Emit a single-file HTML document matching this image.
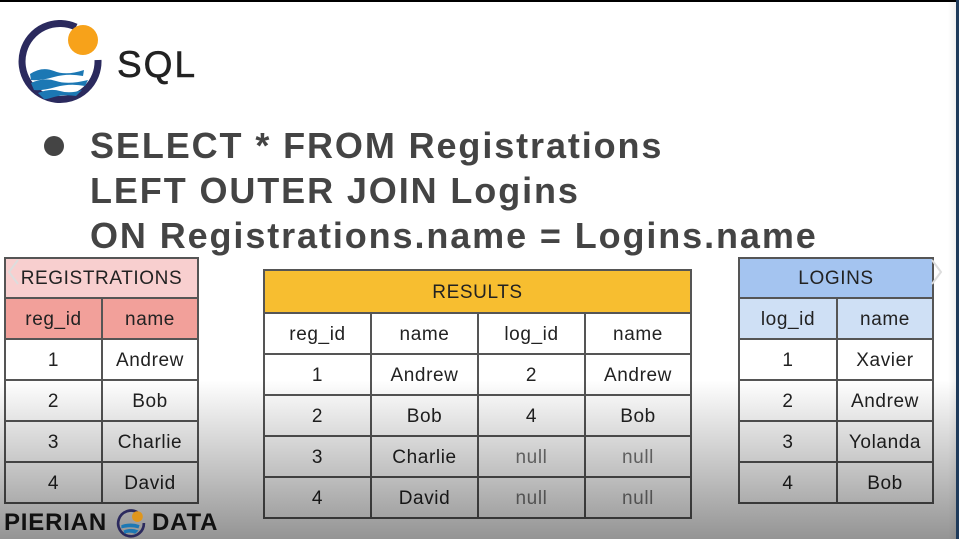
<!DOCTYPE html>
<html><head><meta charset="utf-8"><style>
*{margin:0;padding:0;box-sizing:border-box}
body{width:959px;height:539px;overflow:hidden;background:#fff;position:relative;font-family:"Liberation Sans",sans-serif;color:#333}
.top{position:absolute;left:0;top:0;width:956px;height:2px;background:#000}
.right{position:absolute;right:0;top:0;width:3px;height:539px;background:#1e3a5a}
.rshade{position:absolute;right:3px;top:0;width:8px;height:539px;background:linear-gradient(90deg,rgba(0,0,0,0),rgba(0,0,0,0.06))}
.title{position:absolute;left:117px;top:44px;font-size:37px;color:#222;letter-spacing:2px;-webkit-text-stroke:0.6px #222}
.code{position:absolute;left:90px;top:123px;font-size:36px;line-height:45px;color:#444;font-weight:bold;letter-spacing:1.9px}
.bullet{position:absolute;left:44px;top:136px;width:20px;height:20px;border-radius:50%;background:#444}
table{position:absolute;border-collapse:collapse;font-size:19px;letter-spacing:0.6px;text-align:center;color:#222}
td{border:2px solid #555;height:41px;padding:2px 0 0}
.hd td{height:40px}
.null{color:#777}
.shade{position:absolute;left:0;top:380px;width:959px;height:159px;background:linear-gradient(180deg,rgba(0,0,0,0),rgba(0,0,0,0.42));pointer-events:none}
.brand{position:absolute;top:509px;font-size:24px;font-weight:bold;color:#111;letter-spacing:0.8px}
</style></head><body>
<div class="top"></div>
<svg style="position:absolute;left:18px;top:20px" width="86" height="86" viewBox="0 0 86 86">
<path d="M58 7 A38 38 0 1 0 80 40" fill="none" stroke="#2b2a5e" stroke-width="7"/>
<circle cx="65" cy="20" r="15" fill="#f7a21a"/>
<path d="M12 54 Q24 46 36 51 T66 50 L65 56 Q50 53 36 57 T13 60Z" fill="#1c78b4"/>
<path d="M13 63 Q26 57 38 61 T70 60 L67 66 Q52 63 38 67 T16 70Z" fill="#1c78b4"/>
<path d="M20 73 Q32 68 42 71 T64 70 L58 76 Q46 74 36 77 T26 79Z" fill="#1c78b4"/>
</svg>
<div class="title">SQL</div>
<div class="bullet"></div>
<div class="code">SELECT * FROM Registrations<br>LEFT OUTER JOIN Logins<br>ON Registrations.name = Logins.name</div>

<table style="left:4px;top:257px;width:195px">
<tr class="hd"><td colspan="2" style="background:#f8cfcf">REGISTRATIONS</td></tr>
<tr><td style="background:#f2a09a;width:97px">reg_id</td><td style="background:#f2a09a">name</td></tr>
<tr><td>1</td><td>Andrew</td></tr>
<tr><td>2</td><td>Bob</td></tr>
<tr><td>3</td><td>Charlie</td></tr>
<tr><td>4</td><td>David</td></tr>
</table>

<table style="left:263px;top:269px;width:429px">
<tr class="hd"><td colspan="4" style="background:#f7be30;height:43px">RESULTS</td></tr>
<tr><td style="width:107px">reg_id</td><td style="width:107px">name</td><td style="width:107px">log_id</td><td>name</td></tr>
<tr><td>1</td><td>Andrew</td><td>2</td><td>Andrew</td></tr>
<tr><td>2</td><td>Bob</td><td>4</td><td>Bob</td></tr>
<tr><td>3</td><td>Charlie</td><td class="null">null</td><td class="null">null</td></tr>
<tr><td>4</td><td>David</td><td class="null">null</td><td class="null">null</td></tr>
</table>

<table style="left:738px;top:257px;width:196px">
<tr class="hd"><td colspan="2" style="background:#a4c4f0">LOGINS</td></tr>
<tr><td style="background:#cfe0f5;width:98px">log_id</td><td style="background:#cfe0f5">name</td></tr>
<tr><td>1</td><td>Xavier</td></tr>
<tr><td>2</td><td>Andrew</td></tr>
<tr><td>3</td><td>Yolanda</td></tr>
<tr><td>4</td><td>Bob</td></tr>
</table>

<div class="shade"></div>
<svg style="position:absolute;left:6px;top:258px" width="14" height="28"><path d="M12 2 L3 14 L12 26" fill="none" stroke="#ddd" stroke-width="2"/></svg>
<svg style="position:absolute;left:930px;top:258px" width="14" height="28"><path d="M2 2 L11 14 L2 26" fill="none" stroke="#ddd" stroke-width="2"/></svg>
<div class="brand" style="left:4px">PIERIAN</div>
<div class="brand" style="left:152px">DATA</div>
<svg style="position:absolute;left:116px;top:508px" width="30" height="30" viewBox="0 0 28 28">
<path d="M20 4 A12 12 0 1 0 26 14" fill="none" stroke="#2b2a5e" stroke-width="2.5"/>
<circle cx="20" cy="8" r="5" fill="#e0961c"/>
<path d="M5 16 Q14 13 22 16 L21 19 Q13 17 5 19Z M7 21 Q14 18 21 21 L18 24 Q12 22 8 24Z" fill="#1c78b4"/>
</svg>
<div class="rshade"></div>
<div class="right"></div>
</body></html>
